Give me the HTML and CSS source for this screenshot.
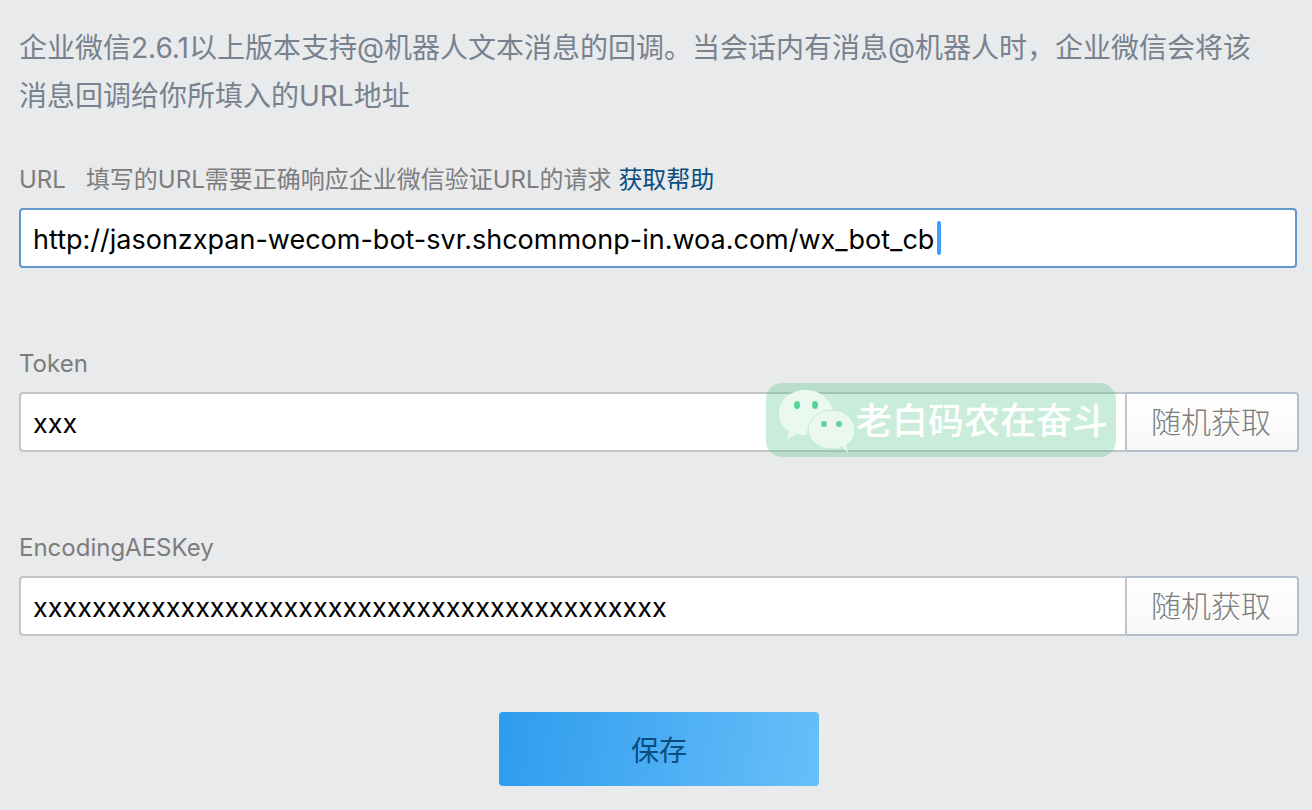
FILE: index.html
```
<!DOCTYPE html>
<html lang="zh-CN">
<head>
  <meta charset="utf-8">
  <title>企业微信机器人回调配置</title>
  <link rel="stylesheet" href="styles.css">
</head>
<body>
  <form class="callback-form">
    <p class="intro">企业微信2.6.1以上版本支持@机器人文本消息的回调。当会话内有消息@机器人时，企业微信会将该消息回调给你所填入的URL地址</p>

    <div class="field">
      <div class="field-label">
        <label for="url">URL</label>
        <span class="tip">填写的URL需要正确响应企业微信验证URL的请求 <a class="help" href="#">获取帮助</a></span>
      </div>
      <div class="field-row url-row">
        <input class="text-input active" id="url" type="text" value="http://jasonzxpan-wecom-bot-svr.shcommonp-in.woa.com/wx_bot_cb">
        <span class="caret"></span>
      </div>
    </div>

    <div class="field">
      <div class="field-label"><label for="token">Token</label></div>
      <div class="field-row">
        <input class="text-input joined" id="token" type="text" value="xxx">
        <button class="random" type="button">随机获取</button>
        <div class="watermark">
          <svg class="wechat" viewBox="0 0 80 64" width="80" height="64">
            <path fill="#ebf8f0" d="M30 2C14 2 3 12 3 25c0 8 4 14 10 18l-2 8 10-5c3 1 6 1 10 1 1-13 12-21 26-24C54 10 43 2 30 2z"/>
            <path fill="#ebf8f0" stroke="#c0ead4" d="M56 22c-13 0-24 9-24 20 0 10 10 19 24 19 3 0 6 0 9-2l7 5-1-7c5-3 8-8 8-15 0-11-10-20-23-20z"/>
            <ellipse cx="21" cy="17" rx="3" ry="4" fill="#57d495"/>
            <ellipse cx="39" cy="17" rx="3" ry="4" fill="#57d495"/>
            <circle cx="48" cy="36" r="3" fill="#57d495"/>
            <circle cx="63" cy="36" r="3" fill="#57d495"/>
          </svg>
          <span class="watermark-name">老白码农在奋斗</span>
        </div>
      </div>
    </div>

    <div class="field">
      <div class="field-label"><label for="aeskey">EncodingAESKey</label></div>
      <div class="field-row">
        <input class="text-input joined" id="aeskey" type="text" value="xxxxxxxxxxxxxxxxxxxxxxxxxxxxxxxxxxxxxxxxxxx">
        <button class="random" type="button">随机获取</button>
      </div>
    </div>

    <button class="save" type="submit">保存</button>
  </form>
</body>
</html>
```
FILE: styles.css
```
* {
  box-sizing: border-box;
}

body {
  margin: 0;
  background: #e8eaec;
  font-family: Inter, "Noto Sans CJK SC", sans-serif;
}

input, button {
  font-family: inherit;
}

.callback-form {
  display: flex;
  flex-direction: column;
  padding: 24px 13px 24px 19px;
}

.intro {
  margin: 0 0 44px;
  padding-right: 24px;
  color: #78828e;
  font-size: 28px;
  line-height: 48px;
}

.field {
  margin-bottom: 80px;
}

.field-label {
  display: flex;
  gap: 20px;
  margin-bottom: 12px;
  color: #7d7d7d;
  font-size: 24px;
  line-height: 32px;
}

.help {
  color: #0b4d80;
  text-decoration: none;
}

.field-row {
  position: relative;
  display: flex;
}

.url-row {
  margin-right: 2px;
}

.text-input {
  flex: 1;
  min-width: 0;
  height: 60px;
  padding: 2px 12px 0;
  border: 2px solid #c4c5c7;
  border-radius: 4px;
  background: #fff;
  color: #000;
  font-size: 27px;
  outline: none;
}

.active {
  border-color: #6197ca;
}

.joined {
  border-right: 0;
  border-radius: 4px 0 0 4px;
}

/* text cursor of the focused field */
.caret {
  position: absolute;
  top: 13px;
  left: 918px;
  width: 4px;
  height: 34px;
  border-radius: 2px;
  background: #429dff;
}

.random {
  width: 174px;
  height: 60px;
  padding: 0 2px 4px 0;
  border: 2px solid #b2bfca;
  border-left-color: #c4c5c7;
  border-radius: 0 4px 4px 0;
  background: linear-gradient(#fff, #f7f7f8);
  color: #7d7d7d;
  font-size: 30px;
  font-weight: 300;
}

.watermark {
  position: absolute;
  top: -9px;
  right: 183px;
  display: flex;
  align-items: center;
  width: 350px;
  height: 74px;
  padding-left: 10px;
  border-radius: 16px;
  background: rgba(76, 194, 131, 0.3);
  color: #fff;
  font-size: 36px;
  font-weight: 500;
  white-space: nowrap;
}

.watermark-name {
  padding-bottom: 4px;
}

.wechat {
  flex: none;
}

.save {
  align-self: center;
  width: 320px;
  height: 74px;
  margin-top: -4px;
  border: 0;
  border-radius: 4px;
  background: linear-gradient(100deg, #2d9cee, #68bff9);
  color: #0b4d80;
  font-size: 28px;
}
```
